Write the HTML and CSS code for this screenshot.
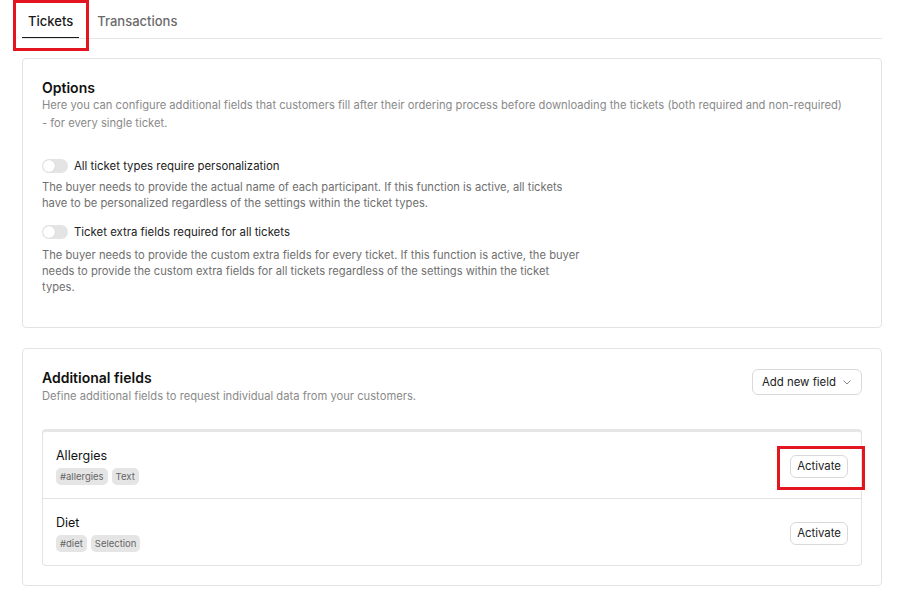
FILE: index.html
```html
<!DOCTYPE html>
<html lang="en">
<head>
<meta charset="utf-8">
<title>Tickets settings</title>
<link rel="stylesheet" href="styles.css">
</head>
<body>
<nav class="tabs">
  <div class="tab active">Tickets<span class="highlight hl-tab"></span></div>
  <div class="tab">Transactions</div>
</nav>

<section class="card options">
  <h2 class="card-title">Options</h2>
  <p class="card-desc">Here you can configure additional fields that customers fill after their ordering process before downloading the tickets (both required and non-required) - for every single ticket.</p>

  <div class="setting">
    <label class="toggle-row"><span class="toggle"><span class="knob"></span></span>All ticket types require personalization</label>
    <p class="setting-desc">The buyer needs to provide the actual name of each participant. If this function is active, all tickets have to be personalized regardless of the settings within the ticket types.</p>
  </div>
  <div class="setting">
    <label class="toggle-row"><span class="toggle"><span class="knob"></span></span>Ticket extra fields required for all tickets</label>
    <p class="setting-desc">The buyer needs to provide the custom extra fields for every ticket. If this function is active, the buyer needs to provide the custom extra fields for all tickets regardless of the settings within the ticket types.</p>
  </div>
</section>

<section class="card fields">
  <div class="card-head">
    <div>
      <h2 class="card-title">Additional fields</h2>
      <p class="card-desc">Define additional fields to request individual data from your customers.</p>
    </div>
    <button class="btn btn-add">Add new field <svg class="chev" width="8" height="5" viewBox="0 0 8 5"><path d="M0.5 0.5 L4 4 L7.5 0.5" fill="none" stroke="#888" stroke-width="1"/></svg></button>
  </div>
  <div class="field-list">
    <div class="field-row">
      <div class="field-info">
        <div class="field-name">Allergies</div>
        <div class="tags"><span class="tag">#allergies</span><span class="tag">Text</span></div>
      </div>
      <button class="btn btn-activate">Activate<span class="highlight hl-btn"></span></button>
    </div>
    <div class="field-row">
      <div class="field-info">
        <div class="field-name">Diet</div>
        <div class="tags"><span class="tag">#diet</span><span class="tag">Selection</span></div>
      </div>
      <button class="btn btn-activate">Activate</button>
    </div>
  </div>
</section>
</body>
</html>
```

FILE: styles.css
```css
* { box-sizing: border-box; }
html, body { margin: 0; background: #fff; }
body {
  padding: 0 20px 0 22px;
  font-family: Inter, "Noto Sans", "Liberation Sans", sans-serif;
  color: #1a1a1a;
}
.tabs {
  display: flex;
  gap: 12px;
  border-bottom: 1px solid #e6e6e6;
  height: 39px;
}
.tab {
  position: relative;
  padding: 13px 6px 0;
  font-size: 13px;
  line-height: 16px;
  color: #6b6b6b;
  font-weight: 500;
}
.tab.active {
  color: #1a1a1a;
  border-bottom: 1px solid #1a1a1a;
}
.highlight {
  position: absolute;
  border: 3px solid #e3161f;
  pointer-events: none;
}
.hl-tab { left: -9px; top: 0; right: -10px; bottom: -14px; }
.card {
  margin-top: 19px;
  border: 1px solid #e3e3e3;
  border-radius: 4px;
  padding: 19px 19px 20px;
}
.card + .card { margin-top: 20px; }
.card-title {
  margin: 0;
  font-size: 14px;
  line-height: 20px;
  font-weight: 600;
  color: #111;
}
.card-desc {
  margin: 0;
  font-size: 11.2px;
  line-height: 18px;
  color: #8a8a8a;
}
.options { padding-bottom: 32px; }
.options .card-desc { margin-top: -2px; max-width: 804px; }
.setting { margin-top: 24px; }
.setting + .setting { margin-top: 11px; }
.toggle-row {
  display: flex;
  align-items: center;
  gap: 6px;
  font-size: 11.4px;
  line-height: 20px;
  color: #222;
}
.toggle {
  width: 26px;
  height: 14px;
  border-radius: 7px;
  background: #e4e4e4;
  display: flex;
  align-items: center;
  padding: 1px;
}
.knob {
  width: 12px;
  height: 12px;
  border-radius: 50%;
  background: #fff;
  box-shadow: 0 0 1px rgba(0,0,0,.2);
}
.setting-desc {
  margin: 3px 0 0;
  max-width: 540px;
  font-size: 11.2px;
  line-height: 16px;
  color: #6f6f6f;
}
.setting + .setting .setting-desc { margin-top: 5px; }
.card-head {
  display: flex;
  justify-content: space-between;
  align-items: flex-start;
}
.fields { padding-bottom: 19px; }
.fields .card-desc { margin-top: -1px; }
.btn {
  position: relative;
  font-family: inherit;
  background: #fff;
  border: 1px solid #d9d9d9;
  border-radius: 6px;
  color: #222;
  font-size: 11.4px;
  cursor: pointer;
}
.btn-add {
  margin-top: 1px;
  height: 26px;
  padding: 0 10px 0 9px;
  display: flex;
  align-items: center;
  gap: 7px;
}
.field-list {
  margin-top: 24px;
  border: 1px solid #e3e3e3;
  border-top: 3px solid #e6e6e6;
  border-radius: 4px;
}
.field-row {
  display: flex;
  justify-content: space-between;
  align-items: center;
  padding: 15px 13px 13px;
}
.field-row + .field-row { border-top: 1px solid #e3e3e3; }
.field-name {
  font-size: 12.5px;
  line-height: 18px;
  color: #111;
}
.tags { display: flex; gap: 4px; margin-top: 3px; }
.tag {
  background: #e5e5e5;
  color: #666;
  font-size: 9.5px;
  line-height: 17px;
  padding: 0 4px;
  border-radius: 5px;
}
.btn-activate {
  height: 23px;
  padding: 0 6px;
}
.hl-btn { left: -14px; top: -10px; right: -18px; bottom: -13px; }
```
